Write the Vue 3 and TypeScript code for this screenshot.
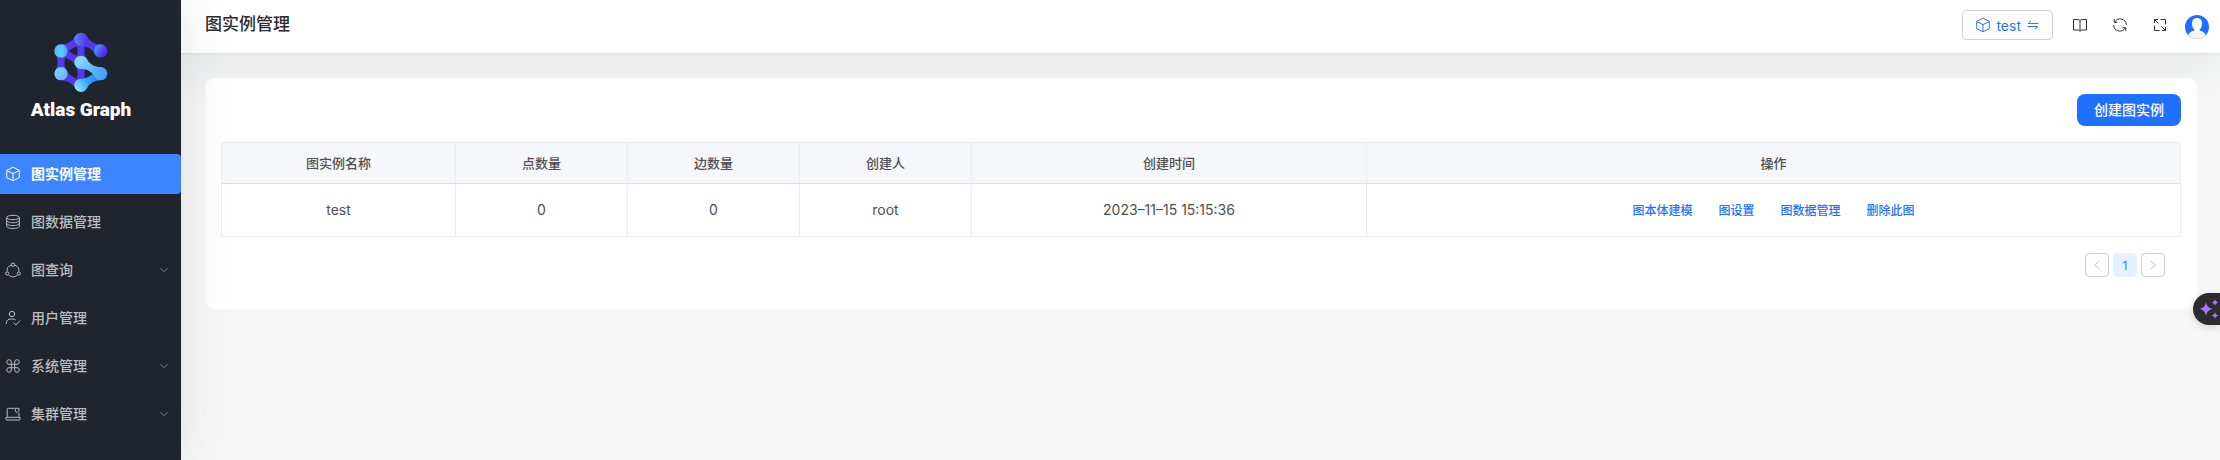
<script setup lang="ts">
interface MenuItem {
  label: string
  icon: string
  active?: boolean
  expandable?: boolean
}

interface GraphRow {
  name: string
  nodes: number
  edges: number
  creator: string
  createdAt: string
}

type Point = [number, number]

const menu: MenuItem[] = [
  { label: '图实例管理', icon: 'cube', active: true },
  { label: '图数据管理', icon: 'data' },
  { label: '图查询', icon: 'ring', expandable: true },
  { label: '用户管理', icon: 'user' },
  { label: '系统管理', icon: 'command', expandable: true },
  { label: '集群管理', icon: 'laptop', expandable: true },
]

const columns = ['图实例名称', '点数量', '边数量', '创建人', '创建时间', '操作']
const rows: GraphRow[] = [
  { name: 'test', nodes: 0, edges: 0, creator: 'root', createdAt: '2023–11–15 15:15:36' },
]
const actions = ['图本体建模', '图设置', '图数据管理', '删除此图']

const RADIUS = 20
const top: Point = [122, 58]
const upperLeft: Point = [62, 93]
const upperRight: Point = [181, 93]
const center: Point = [122, 127]
const lowerLeft: Point = [62, 161]
const lowerRight: Point = [181, 161]
const bottom: Point = [122, 196]

// Outline of a bridge between two circles, narrowing towards its middle.
function bridge(a: Point, b: Point): string {
  const angle = Math.atan2(b[1] - a[1], b[0] - a[0])
  const dist = Math.hypot(b[0] - a[0], b[1] - a[1])
  const spread = 0.95
  const on = (p: Point, t: number, r = RADIUS): Point => [p[0] + r * Math.cos(t), p[1] + r * Math.sin(t)]
  const pull = dist * 0.2
  const p1 = on(a, angle - spread)
  const p2 = on(b, angle + Math.PI + spread)
  const p3 = on(b, angle + Math.PI - spread)
  const p4 = on(a, angle + spread)
  const c1 = on(p1, angle - spread + Math.PI / 2, pull)
  const c2 = on(p2, angle + Math.PI + spread - Math.PI / 2, pull)
  const c3 = on(p3, angle + Math.PI - spread + Math.PI / 2, pull)
  const c4 = on(p4, angle + spread - Math.PI / 2, pull)
  return `M${p1} C${c1} ${c2} ${p2} L${p3} C${c3} ${c4} ${p4}Z`
}

const purpleBridges = [
  bridge(top, upperLeft),
  bridge(top, upperRight),
  bridge(top, center),
  bridge(upperLeft, lowerLeft),
  bridge(upperLeft, center),
  bridge(lowerLeft, bottom),
  bridge(center, bottom),
]
</script>

<template>
  <div class="layout">
    <aside class="sidebar">
      <div class="brand">
        <svg class="brand-mark" viewBox="38 36 168 180" aria-hidden="true">
          <defs>
            <linearGradient id="g-top" x1="0" x2="1"><stop offset="0" stop-color="#4f8bf5" /><stop offset="1" stop-color="#5a2cf2" /></linearGradient>
            <linearGradient id="g-ur" x1="0" y1="0.2" x2="1" y2="0.8"><stop offset="0.1" stop-color="#4c9df5" /><stop offset="0.75" stop-color="#4f2bf0" /></linearGradient>
            <linearGradient id="g-ul" x1="0" x2="1"><stop offset="0" stop-color="#5cbcf6" /><stop offset="0.6" stop-color="#56cdf2" /><stop offset="1" stop-color="#4b9df0" /></linearGradient>
            <linearGradient id="g-light" x1="0" y1="0" x2="1" y2="1"><stop offset="0" stop-color="#86dcff" /><stop offset="1" stop-color="#5eaaff" /></linearGradient>
            <linearGradient id="g-arm" gradientUnits="userSpaceOnUse" x1="110" y1="110" x2="195" y2="175"><stop offset="0" stop-color="#8be0ff" /><stop offset="1" stop-color="#3f98ff" /></linearGradient>
            <linearGradient id="g-base" gradientUnits="userSpaceOnUse" x1="110" y1="210" x2="175" y2="165"><stop offset="0" stop-color="#8be4ff" /><stop offset="0.5" stop-color="#3ba3ff" /><stop offset="1" stop-color="#1580f5" /></linearGradient>
          </defs>
          <path v-for="(d, i) in purpleBridges" :key="i" :d="d" fill="#5338ef" />
          <path :d="bridge(bottom, lowerRight)" fill="url(#g-base)" />
          <circle cx="122" cy="58" r="20" fill="url(#g-top)" />
          <circle cx="181" cy="93" r="20" fill="url(#g-ur)" />
          <circle cx="62" cy="93" r="20" fill="url(#g-ul)" />
          <circle cx="62" cy="161" r="20" fill="url(#g-light)" />
          <circle cx="122" cy="196" r="20" fill="url(#g-base)" />
          <path :d="bridge(center, lowerRight)" fill="url(#g-arm)" />
          <circle cx="122" cy="127" r="20" fill="url(#g-arm)" />
          <circle cx="181" cy="161" r="20" fill="url(#g-arm)" />
        </svg>
        <span class="brand-name">Atlas Graph</span>
      </div>

      <nav class="menu">
        <a v-for="item in menu" :key="item.label" href="#" class="menu-item" :class="{ active: item.active }">
          <svg class="menu-icon" viewBox="0 0 16 16" aria-hidden="true">
            <template v-if="item.icon === 'cube'">
              <path d="M8 1.200l6.300 3.200v7.200L8 14.800l-6.300-3.200V4.400zM1.700 4.500L8 7.600l6.300-3.100M8 7.600v7.200" />
            </template>
            <template v-else-if="item.icon === 'data'">
              <ellipse cx="8" cy="3.500" rx="6.300" ry="2.200" />
              <path d="M1.700 3.500v8.700c0 1.300 2.800 2.300 6.300 2.300s6.300-1 6.300-2.300V3.500M1.700 6.400c0 1.300 2.800 2.300 6.300 2.300s6.300-1 6.300-2.300M1.700 9.300c0 1.300 2.800 2.300 6.300 2.300s6.300-1 6.300-2.300" />
            </template>
            <template v-else-if="item.icon === 'ring'">
              <path d="M6 3.200A6 6 0 0 0 2.100 9.500M10 3.200A6 6 0 0 1 13.900 9.500M3.700 13.200a6.200 6.200 0 0 0 8.600 0" />
              <circle cx="8" cy="2.700" r="1.700" />
              <circle cx="2.200" cy="11.500" r="1.600" />
              <circle cx="13.800" cy="11.500" r="1.600" />
            </template>
            <template v-else-if="item.icon === 'user'">
              <circle cx="7" cy="4" r="2.700" />
              <path d="M1.300 14v-1.200c0-2.300 2-3.800 4.600-3.800h1.600c1.400 0 2.500.4 3.200 1M8.500 12.600l2.300 2.300 4.400-4.300" />
            </template>
            <template v-else-if="item.icon === 'command'">
              <path d="M6.300 6.300h3.400v3.400H6.300zM6.300 6.300V4a2.300 2.300 0 1 0-2.300 2.300zM9.700 6.300V4a2.300 2.300 0 1 1 2.300 2.300zM6.300 9.700V12a2.300 2.300 0 1 1-2.300-2.300zM9.700 9.700V12a2.300 2.300 0 1 0 2.300-2.300z" />
            </template>
            <template v-else>
              <path d="M9.500 2.300H3.200a1 1 0 0 0-1 1v7.500M14 7v3.800M1 11.300h14v1.700a1 1 0 0 1-1 1H2a1 1 0 0 1-1-1z" />
              <path d="M10.300 2.300H14v3L12.200 6.600 10.300 5.300z" />
            </template>
          </svg>
          <span class="menu-label">{{ item.label }}</span>
          <svg v-if="item.expandable" class="menu-arrow" viewBox="0 0 10 10" aria-hidden="true">
            <path d="M1.500 3.200L5 6.700l3.500-3.500" />
          </svg>
        </a>
      </nav>
    </aside>

    <div class="main">
      <header class="header">
        <h1 class="title">图实例管理</h1>
        <div class="tools">
          <button type="button" class="graph-switch">
            <svg class="tool-icon" viewBox="0 0 16 16" aria-hidden="true">
              <path d="M8 1.200l6.300 3.200v7.200L8 14.800l-6.300-3.200V4.400zM1.700 4.500L8 7.600l6.300-3.100M8 7.600v7.200" />
            </svg>
            <span>test</span>
            <svg class="swap-icon" viewBox="0 0 12 12" aria-hidden="true">
              <path d="M11.500 4.500H1l3-2.500M.5 7.500H11L8 10" />
            </svg>
          </button>
          <button type="button" class="tool" aria-label="文档">
            <svg class="tool-icon" viewBox="0 0 16 16" aria-hidden="true">
              <path d="M1.500 2.500h4.700c1 0 1.800.6 1.800 1.500 0-.9.800-1.500 1.800-1.500h4.700v10.500h-5L8 14.300l-1.500-1.300h-5zM8 4v10" />
            </svg>
          </button>
          <button type="button" class="tool" aria-label="刷新">
            <svg class="tool-icon" viewBox="0 0 16 16" aria-hidden="true">
              <path d="M2.800 5.200A6.100 6.100 0 0 1 14.300 8M13.200 10.800A6.100 6.100 0 0 1 1.700 8M2.200 2v3.300h3.300M13.800 14v-3.300h-3.300" />
            </svg>
          </button>
          <button type="button" class="tool" aria-label="全屏">
            <svg class="tool-icon" viewBox="0 0 16 16" aria-hidden="true">
              <path d="M8.500 2.500h5v5M7.500 13.500h-5v-5M2.500 6V2.500H6M2.500 2.500l4 4M13.500 10v3.500H10M13.500 13.500l-4-4" />
            </svg>
          </button>
          <button type="button" class="avatar" aria-label="账户">
            <svg viewBox="0 0 24 24" aria-hidden="true">
              <defs><clipPath id="avatar-clip"><circle cx="12" cy="12" r="12" /></clipPath></defs>
              <g clip-path="url(#avatar-clip)">
                <path fill="#1f70ff" d="M0 0h24v24H0z" />
                <path fill="#f3f5f8" d="M2.500 24c0-5.500 3-7.500 6.500-8.500h6c3.500 1 6.500 3 6.500 8.500z" />
                <path fill="#fff" d="M12 3c3.300 0 5 2.300 5 5.300 0 3-1 5.200-2.500 6.500v1.400c-.5 1-4.500 1-5 0v-1.400C8 13.500 7 11.300 7 8.300 7 5.300 8.700 3 12 3z" />
              </g>
            </svg>
          </button>
        </div>
      </header>

      <main class="content">
        <section class="card">
          <div class="card-bar">
            <button type="button" class="primary">创建图实例</button>
          </div>
          <table class="table">
            <colgroup>
              <col class="c-name" />
              <col class="c-count" />
              <col class="c-count" />
              <col class="c-count" />
              <col class="c-time" />
              <col />
            </colgroup>
            <thead>
              <tr>
                <th v-for="column in columns" :key="column" scope="col">{{ column }}</th>
              </tr>
            </thead>
            <tbody>
              <tr v-for="row in rows" :key="row.name">
                <td>{{ row.name }}</td>
                <td>{{ row.nodes }}</td>
                <td>{{ row.edges }}</td>
                <td>{{ row.creator }}</td>
                <td>{{ row.createdAt }}</td>
                <td>
                  <div class="actions">
                    <a v-for="action in actions" :key="action" href="#">{{ action }}</a>
                  </div>
                </td>
              </tr>
            </tbody>
          </table>
          <nav class="pager" aria-label="分页">
            <button type="button" disabled aria-label="上一页">
              <svg viewBox="0 0 12 12" aria-hidden="true"><path d="M8.500 2L3.500 6l5 4" /></svg>
            </button>
            <button type="button" class="current" aria-current="page">1</button>
            <button type="button" disabled aria-label="下一页">
              <svg viewBox="0 0 12 12" aria-hidden="true"><path d="M3.500 2l5 4-5 4" /></svg>
            </button>
          </nav>
        </section>
      </main>
    </div>

    <button type="button" class="assistant" aria-label="助手">
      <svg viewBox="0 0 20 20" aria-hidden="true">
        <path d="M7 3c.9 4.500 2.500 6.100 7 7-4.500.9-6.100 2.500-7 7-.9-4.500-2.500-6.100-7-7 4.500-.9 6.100-2.500 7-7z" />
        <path d="M16 0c.6 2.200 1.300 2.900 3.500 3.500-2.200.6-2.900 1.300-3.500 3.500-.6-2.200-1.300-2.900-3.500-3.500C14.700 2.900 15.400 2.200 16 0z" />
        <path d="M16 13c.6 2.200 1.300 2.900 3.500 3.500-2.200.6-2.900 1.300-3.500 3.500-.6-2.200-1.300-2.900-3.500-3.500 2.200-.6 2.900-1.300 3.500-3.500z" />
      </svg>
    </button>
  </div>
</template>

<style>
body {
  background: #f7f7f7;
}
</style>

<style scoped>
.layout {
  display: flex;
  min-height: 100vh;
  overflow: hidden;
  font-family: Inter, "Noto Sans CJK SC", sans-serif;
  font-size: 14px;
  color: #4e5053;
}

button {
  padding: 0;
  border: 0;
  background: none;
  font: inherit;
  color: inherit;
}

a {
  text-decoration: none;
}

svg {
  display: block;
  flex: none;
}

.sidebar {
  position: relative;
  z-index: 2;
  flex: none;
  width: 181px;
  background: #20242d;
  box-shadow: 0 0 50px rgba(29, 45, 62, 0.12);
}

.brand {
  display: flex;
  flex-direction: column;
  align-items: center;
  width: 162px;
  height: 122px;
  padding-top: 32px;
}

.brand-mark {
  width: 56px;
  height: 60px;
}

.brand-name {
  margin-top: 6px;
  font-family: Roboto, sans-serif;
  font-size: 19px;
  font-weight: 900;
  line-height: 24px;
  white-space: nowrap;
  color: #fff;
}

.menu {
  display: flex;
  flex-direction: column;
  gap: 8px;
}

.menu-item {
  display: flex;
  align-items: center;
  height: 40px;
  padding: 0 12px 0 5px;
  font-weight: 500;
  color: #bcbdc0;
}

.menu-item.active {
  border-radius: 0 4px 4px 0;
  background: #3d85ff;
  font-weight: 700;
  color: #fff;
}

.menu-icon,
.tool-icon,
.swap-icon,
.menu-arrow,
.pager svg {
  fill: none;
  stroke: currentColor;
  stroke-width: 1;
}

.menu-icon {
  width: 16px;
  height: 16px;
}

.menu-label {
  flex: 1;
  margin-left: 10px;
  padding-bottom: 2px;
}

.menu-arrow {
  width: 10px;
  height: 10px;
  color: #8a8d92;
}

.main {
  display: flex;
  flex: 1;
  flex-direction: column;
  min-width: 0;
}

.header {
  display: flex;
  align-items: center;
  justify-content: space-between;
  height: 53px;
  padding: 0 11px 0 24px;
  background: #fff;
  box-shadow: 0 1px 2px rgba(29, 45, 62, 0.08), 0 20px 40px rgba(29, 45, 62, 0.07);
}

.title {
  margin: 0;
  padding-bottom: 6px;
  font-size: 17px;
  font-weight: 500;
  line-height: 24px;
  color: #2a2b2d;
}

.tools {
  display: flex;
  align-items: center;
  padding-bottom: 3px;
}

.graph-switch {
  display: flex;
  align-items: center;
  gap: 5px;
  height: 30px;
  margin-right: 19px;
  padding: 0 13px 0 12px;
  border: 1px solid #cfd2d9;
  border-radius: 4px;
  color: #2c76fa;
}

.swap-icon {
  width: 12px;
  height: 12px;
  margin-left: 1px;
}

.tool {
  margin-right: 24px;
  color: #303236;
}

.tool-icon {
  width: 16px;
  height: 16px;
}

.avatar {
  width: 24px;
  height: 24px;
  margin: 3px 0 0 -7px;
}

.content {
  position: relative;
  padding: 25px 23px 24px 24px;
}

.card {
  padding: 16px 16px 32px;
  border-radius: 10px;
  background: #fff;
}

.card-bar {
  display: flex;
  justify-content: flex-end;
  margin-bottom: 16px;
}

.primary {
  width: 104px;
  height: 32px;
  padding-bottom: 2px;
  border-radius: 8px;
  background: #1f70ff;
  font-weight: 500;
  color: #fff;
}

.table {
  width: 100%;
  table-layout: fixed;
  border-spacing: 0;
  border-top: 1px solid #ebecf0;
  border-left: 1px solid #ebecf0;
  border-radius: 4px 4px 0 0;
  text-align: center;
}

.c-name {
  width: 234px;
}

.c-count {
  width: 172px;
}

.c-time {
  width: 395px;
}

th,
td {
  padding: 0 0 2px;
  border-right: 1px solid #ebecf0;
  border-bottom: 1px solid #ebecf0;
}

th {
  height: 38px;
  border-bottom-color: #dee0e5;
  background: #f6f7fa;
  font-size: 13px;
  font-weight: 500;
}

th:first-child {
  border-top-left-radius: 4px;
}

th:last-child {
  border-top-right-radius: 4px;
}

td {
  height: 50px;
}

.actions {
  display: flex;
  justify-content: center;
  gap: 26px;
  font-size: 12px;
  font-weight: 500;
}

.actions a {
  color: #1f70ff;
}

.pager {
  display: flex;
  justify-content: flex-end;
  gap: 4px;
  padding: 16px 16px 0;
}

.pager button {
  display: flex;
  align-items: center;
  justify-content: center;
  width: 24px;
  height: 24px;
  border: 1px solid #cfd0d8;
  border-radius: 4px;
  font-size: 12px;
  color: #c2c3c8;
}

.pager svg {
  width: 12px;
  height: 12px;
}

.pager .current {
  border-color: #e6f1ff;
  background: #e6f1ff;
  color: #2a86e8;
}

.assistant {
  position: fixed;
  z-index: 3;
  top: 293px;
  right: 0;
  width: 27px;
  height: 32px;
  padding-left: 6px;
  overflow: hidden;
  border-radius: 16px 0 0 16px;
  background: #2c2c2e;
  box-shadow: 0 2px 8px rgba(0, 0, 0, 0.15);
}

.assistant svg {
  width: 20px;
  height: 20px;
  fill: #a974ff;
}
</style>
